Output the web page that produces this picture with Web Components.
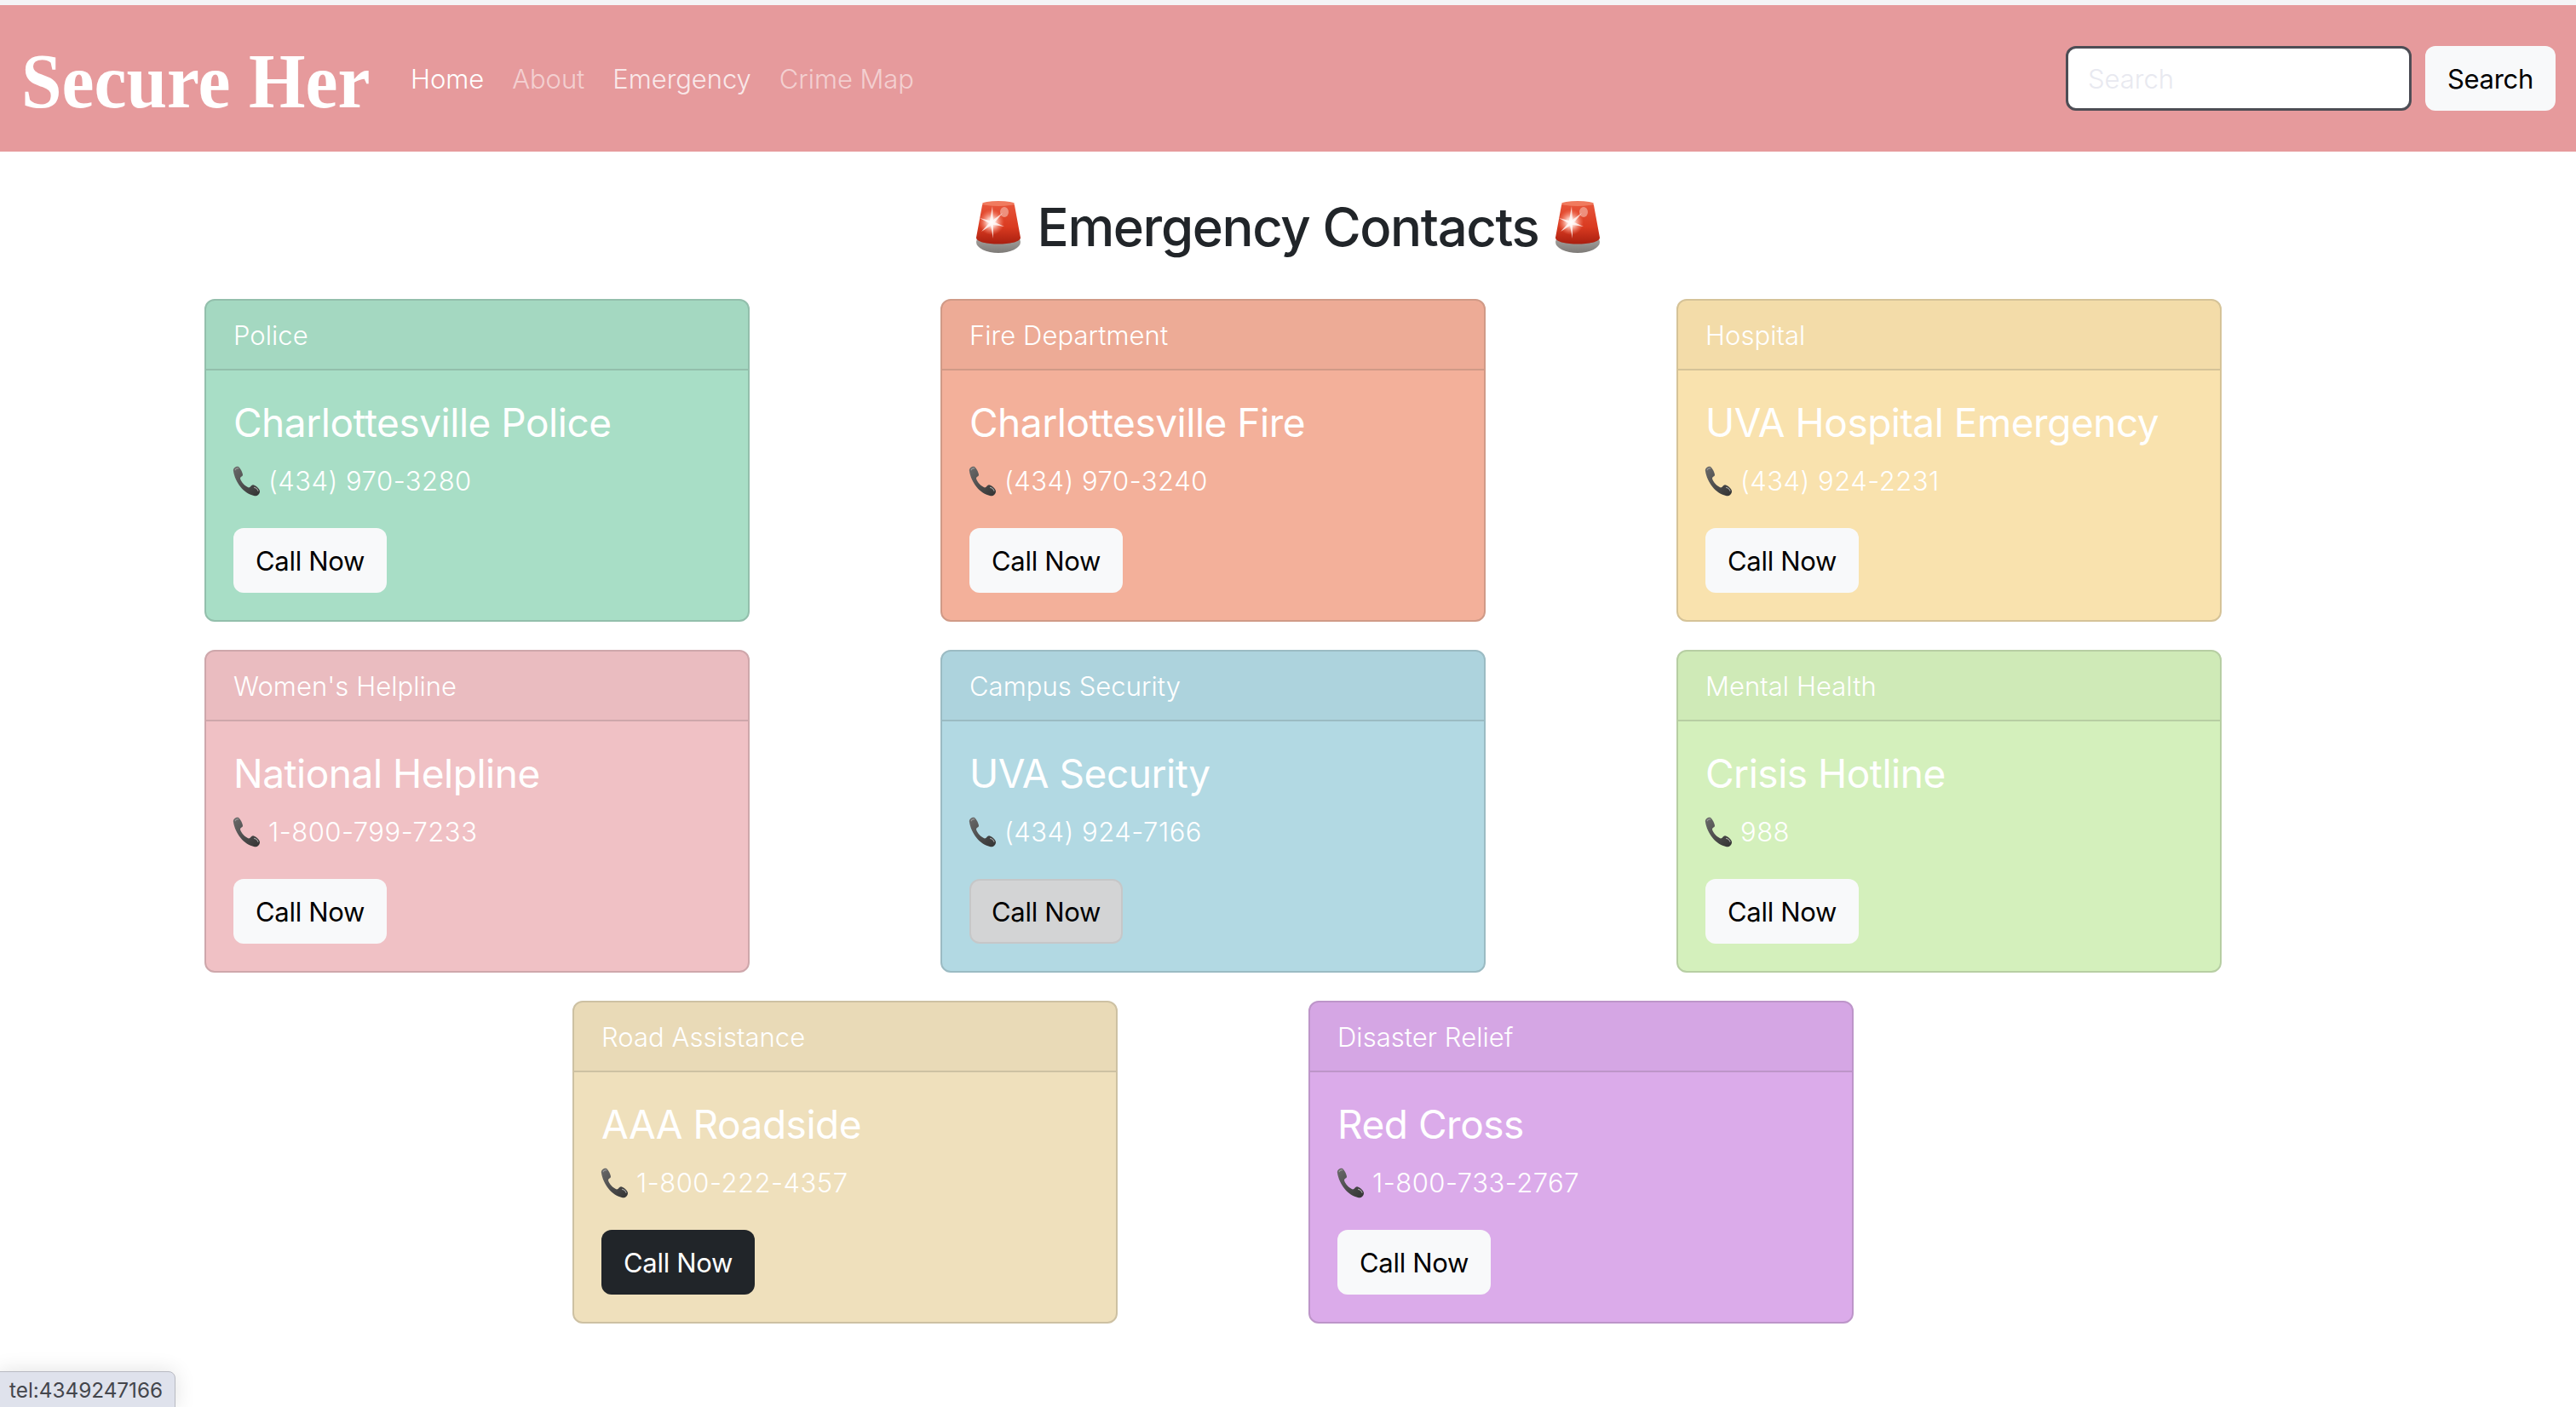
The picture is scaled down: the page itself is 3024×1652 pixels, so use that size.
<!DOCTYPE html>
<html lang="en"><head><meta charset="utf-8"><title>Secure Her</title>
<style>
html,body{margin:0;padding:0;background:#fff}
body{font-family:Inter,"Liberation Sans",sans-serif;width:3024px;height:1652px;overflow:hidden;position:relative}
</style></head><body>
<template id="siren"><style>:host{display:inline-flex}svg{display:block}</style>
<svg width="56" height="64" viewBox="0 0 56 64"><defs>
<linearGradient id="r" x1="0" y1="0" x2="0" y2="1"><stop offset="0" stop-color="#e8573c"/><stop offset=".6" stop-color="#d93a20"/><stop offset="1" stop-color="#a81f10"/></linearGradient>
<radialGradient id="f"><stop offset="0" stop-color="#fff"/><stop offset=".35" stop-color="#ffd9cf" stop-opacity=".9"/><stop offset="1" stop-color="#ff8a70" stop-opacity="0"/></radialGradient>
<linearGradient id="g" x1="0" y1="0" x2="0" y2="1"><stop offset="0" stop-color="#b9b6b2"/><stop offset="1" stop-color="#7d7a77"/></linearGradient></defs>
<ellipse cx="28" cy="50" rx="26" ry="13" fill="url(#g)"/>
<path d="M9 7C9 2 47 2 47 7L54 45C54 55 2 55 2 45Z" fill="url(#r)"/>
<ellipse cx="28" cy="5" rx="19" ry="3" fill="#f07a5e"/>
<ellipse cx="35" cy="15" rx="5" ry="6" fill="#f2a898" opacity=".75"/>
<circle cx="20" cy="27" r="15" fill="url(#f)"/>
<path d="M21 8L22 24 33 16 24 27 35 32 22 30 22 46 19 31 8 38 17 28 6 22 18 25Z" fill="#fff" opacity=".75"/>
</svg></template>
<template id="phone"><style>:host{display:inline-flex;margin-left:-2px}svg{display:block}</style>
<svg width="34" height="36" viewBox="0 0 34 34" preserveAspectRatio="none"><defs><linearGradient id="p" x1="0" y1="0" x2="1" y2="1"><stop offset="0" stop-color="#6a6a6a"/><stop offset="1" stop-color="#333"/></linearGradient></defs>
<path d="M2 6C1 3 5 0 8 1 10 2 13 8 13 10 13 12 10 12 10 14 11 18 16 23 20 24 22 24 23 21 25 21 27 21 33 25 33 28 33 32 29 34 26 33 14 31 4 18 2 6Z" fill="url(#p)"/>
<path d="M4 5C4 3 7 2 8 3M26 24C28 24 31 26 31 28" stroke="#999" stroke-width="1.2" fill="none"/></svg></template>
<script>
function def(name,html){customElements.define(name,class extends HTMLElement{constructor(){super();this.attachShadow({mode:'open'}).innerHTML=html;}})}
def('emoji-siren',document.getElementById('siren').innerHTML);
def('emoji-phone',document.getElementById('phone').innerHTML);
def('nav-link',`<style>:host{display:inline-block;font-size:31px;font-weight:300;color:rgba(255,255,255,var(--o,.55));letter-spacing:-.05px}</style><slot></slot>`);
def('ui-button',`<style>:host{display:inline-flex;align-items:center;justify-content:center;box-sizing:border-box;height:76px;border-radius:12px;font-size:31px;letter-spacing:-.3px;padding:0 var(--p,26px);background:var(--bg,#f8f9fa);color:var(--fg,#000);border:var(--bd,0)}</style><slot></slot>`);
def('search-box',`<style>:host{display:block;box-sizing:border-box;width:406px;height:76px;background:#fff;border:3px solid #4d4d55;border-radius:12px;padding:0 23px;font-size:31px;line-height:72px;color:#e8e9f0;font-weight:300}</style><slot></slot>`);
def('top-bar',`<style>:host{display:flex;align-items:center;height:178px;border-top:6px solid #f4f4f6;background:#e69a9c;padding:0 24px 0 25px;box-sizing:border-box}
.brand{font:700 92px/1 "Liberation Serif",serif;color:#fff;transform:scaleX(.93);transform-origin:left;margin:6px 48px 0 0;width:409px;white-space:nowrap}
nav{display:flex;gap:33px;flex:1}.r{display:flex;gap:16px}</style>
<div class="brand">Secure Her</div><nav><slot name="links"></slot></nav><div class="r"><slot name="search"></slot></div>`);
def('page-title',`<style>:host{display:flex;justify-content:center;align-items:center;gap:18px;box-sizing:border-box;height:173px;padding-top:3px;font-size:61.7px;font-weight:500;color:#212529;letter-spacing:-1.4px}</style><slot></slot>`);
def('card-grid',`<style>:host{display:flex;flex-wrap:wrap;justify-content:center;column-gap:224px;row-gap:33px;width:2368px;margin-left:240px}</style><slot></slot>`);
def('contact-card',`<style>:host{display:block;box-sizing:border-box;width:640px;height:379px;border:2px solid color-mix(in srgb,var(--c) 82%,#333);border-radius:12px;background:var(--c);color:#fff;overflow:hidden}
.h{height:82px;box-sizing:border-box;padding:0 32px;display:flex;align-items:center;font-size:31px;font-weight:300;letter-spacing:.05px;background:rgba(0,0,0,.025);border-bottom:2px solid color-mix(in srgb,var(--c) 82%,#333)}
.b{padding:33px 32px 0}
.t{font-size:46px;line-height:56px;font-weight:400;letter-spacing:-.48px;margin:0 0 14px}
.p{display:flex;align-items:center;gap:9px;font-size:31px;line-height:54px;font-weight:300;letter-spacing:.5px;margin-bottom:28px}</style>
<div class="h"><slot name="k"></slot></div><div class="b"><div class="t"><slot name="t"></slot></div><div class="p"><emoji-phone></emoji-phone><slot name="n"></slot></div><slot name="a"></slot></div>`);
def('status-bubble',`<style>:host{position:absolute;left:-2px;bottom:-2px;box-sizing:border-box;height:44px;padding:0 14px 0 12px;display:flex;align-items:center;background:#dfe2ec;border:1px solid #b8bac2;border-radius:0 8px 0 0;font-size:24.3px;color:#44464c;box-shadow:0 0 24px rgba(0,0,0,.12)}</style><slot></slot>`);
</script>
<top-bar>
<nav-link slot="links" style="--o:1">Home</nav-link><nav-link slot="links">About</nav-link><nav-link slot="links" style="--o:.8">Emergency</nav-link><nav-link slot="links">Crime Map</nav-link>
<search-box slot="search">Search</search-box><ui-button slot="search">Search</ui-button>
</top-bar>
<page-title><emoji-siren></emoji-siren><span>Emergency Contacts</span><emoji-siren></emoji-siren></page-title>
<card-grid>
<contact-card style="--c:#a8dec6"><span slot="k">Police</span><span slot="t">Charlottesville Police</span><span slot="n">(434) 970-3280</span><ui-button slot="a">Call Now</ui-button></contact-card>
<contact-card style="--c:#f3b09a"><span slot="k">Fire Department</span><span slot="t">Charlottesville Fire</span><span slot="n">(434) 970-3240</span><ui-button slot="a">Call Now</ui-button></contact-card>
<contact-card style="--c:#f9e2ae"><span slot="k">Hospital</span><span slot="t">UVA Hospital Emergency</span><span slot="n">(434) 924-2231</span><ui-button slot="a">Call Now</ui-button></contact-card>
<contact-card style="--c:#f0c1c5"><span slot="k">Women's Helpline</span><span slot="t">National Helpline</span><span slot="n">1-800-799-7233</span><ui-button slot="a">Call Now</ui-button></contact-card>
<contact-card style="--c:#b2d9e3"><span slot="k">Campus Security</span><span slot="t">UVA Security</span><span slot="n">(434) 924-7166</span><ui-button slot="a" style="--bg:#d3d4d5;--bd:2px solid #c6c7c8;--p:24px">Call Now</ui-button></contact-card>
<contact-card style="--c:#d4f0bc"><span slot="k">Mental Health</span><span slot="t">Crisis Hotline</span><span slot="n">988</span><ui-button slot="a">Call Now</ui-button></contact-card>
<contact-card style="--c:#efe0bc"><span slot="k">Road Assistance</span><span slot="t">AAA Roadside</span><span slot="n">1-800-222-4357</span><ui-button slot="a" style="--bg:#212529;--fg:#fff">Call Now</ui-button></contact-card>
<contact-card style="--c:#dbabea"><span slot="k">Disaster Relief</span><span slot="t">Red Cross</span><span slot="n">1-800-733-2767</span><ui-button slot="a">Call Now</ui-button></contact-card>
</card-grid>
<status-bubble>tel:4349247166</status-bubble>
</body></html>
